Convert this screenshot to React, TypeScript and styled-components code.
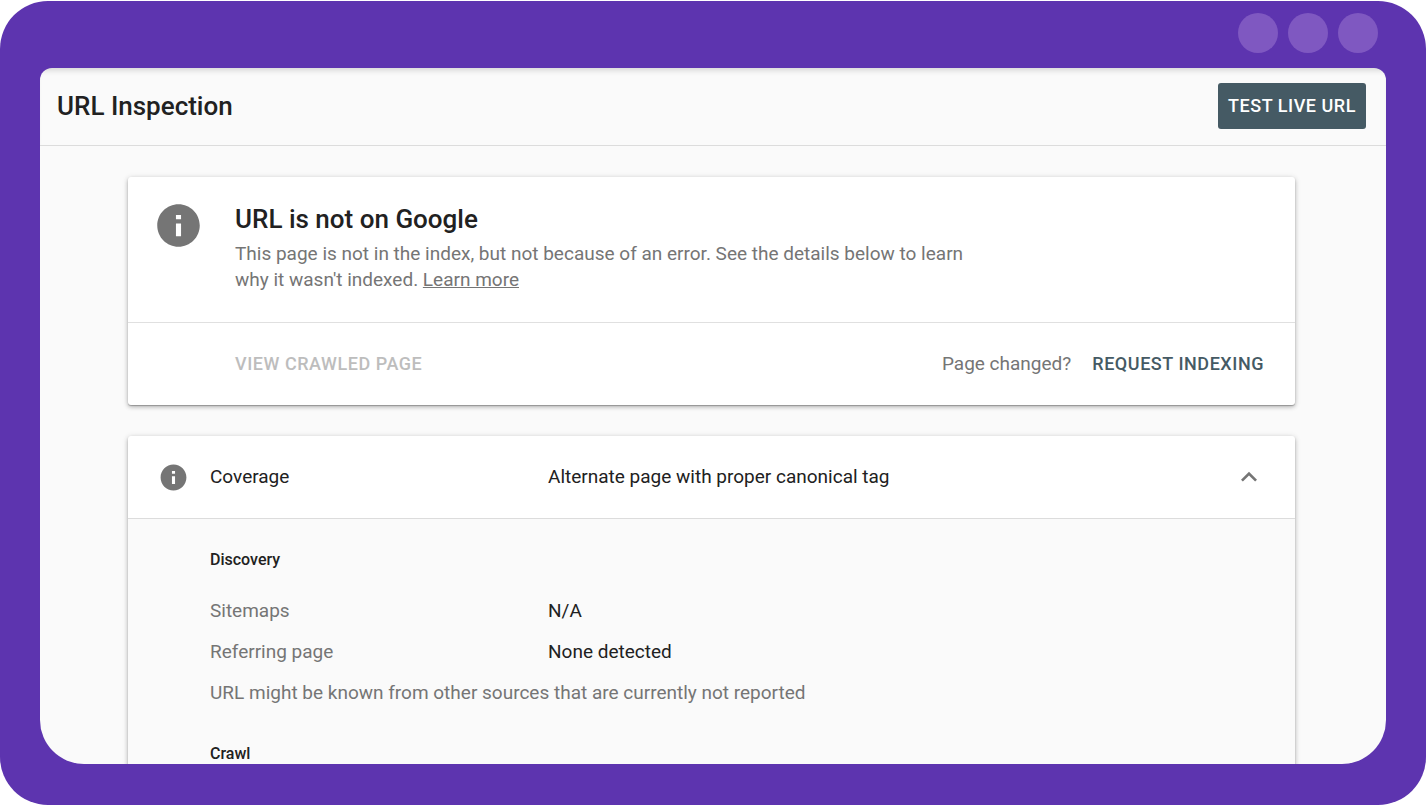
import React, { useState } from "react";
import styled, { createGlobalStyle } from "styled-components";

const GlobalStyle = createGlobalStyle`
  *, *::before, *::after { box-sizing: border-box; }
  body {
    margin: 0;
    background: #fff;
    color: #212121;
    font-family: Roboto, "Liberation Sans", sans-serif;
    font-size: 19px;
    line-height: 26px;
  }
  h1, h2, h3, p, dl, dd { margin: 0; }
  button { font: inherit; border: 0; padding: 0; background: none; cursor: pointer; }
`;

const Frame = styled.div`
  display: flex;
  flex-direction: column;
  height: calc(100vh - 1px);
  margin: 1px 2px 0 0;
  padding: 0 40px 41px;
  border-radius: 48px;
  background: #5d34af;
`;

const FrameBar = styled.div`
  display: flex;
  flex: none;
  justify-content: flex-end;
  align-items: center;
  gap: 10px;
  height: 67px;
  padding: 0 8px 3px 0;
`;

const Dot = styled.span`
  width: 40px;
  height: 40px;
  border-radius: 50%;
  background: #7f58c1;
`;

const Screen = styled.div`
  flex: 1;
  min-height: 0;
  overflow: hidden;
  border-radius: 12px 12px 44px 44px;
  background: #fafafa;
`;

const Header = styled.header`
  display: flex;
  align-items: center;
  justify-content: space-between;
  height: 78px;
  padding: 0 20px 2px 17px;
  border-bottom: 1px solid #dcdcdc;
  box-shadow: inset 0 6px 6px -4px rgba(0, 0, 0, 0.16);
`;

const Title = styled.h1`
  font-size: 26px;
  line-height: 32px;
  font-weight: 500;
`;

const PrimaryButton = styled.button`
  height: 46px;
  padding: 0 10px;
  border-radius: 3px;
  background: #455a64;
  color: #fff;
  font-size: 18px;
  font-weight: 500;
  letter-spacing: 0.03em;
`;

const Content = styled.main`
  display: flex;
  flex-direction: column;
  gap: 31px;
  padding: 31px 91px 31px 88px;
`;

const Card = styled.section`
  border-radius: 3px;
  background: #fff;
  box-shadow: 0 1px 1px rgba(0, 0, 0, 0.24), 0 2px 4px rgba(0, 0, 0, 0.2),
    0 1px 6px rgba(0, 0, 0, 0.14);
`;

const Verdict = styled.div`
  display: flex;
  gap: 31px;
  height: 146px;
  padding: 23px 25px;
  border-bottom: 1px solid #e0e0e0;
`;

const VerdictText = styled.div`
  max-width: 752px;
  padding-top: 3px;
  color: #757575;
`;

const VerdictTitle = styled.h2`
  margin-bottom: 6px;
  color: #212121;
  font-size: 26px;
  line-height: 32px;
  font-weight: 500;
`;

const TextLink = styled.a`
  color: inherit;
  text-decoration: underline;
`;

const Actions = styled.div`
  display: flex;
  align-items: center;
  gap: 21px;
  height: 82px;
  padding: 0 31px 0 107px;
  color: #757575;
`;

const FlatButton = styled.button<{ $push?: boolean }>`
  margin-right: ${(p) => (p.$push ? "auto" : "0")};
  color: #455a64;
  font-size: 18px;
  font-weight: 500;
  letter-spacing: 0.03em;
  &:disabled { color: #bdbdbd; cursor: default; }
`;

const CoverageToggle = styled.button`
  display: grid;
  grid-template-columns: 52px 338px 1fr auto;
  align-items: center;
  width: 100%;
  height: 83px;
  padding: 0 30px;
  border-bottom: 1px solid #dcdcdc;
  color: inherit;
  text-align: left;
`;

const Details = styled.div`
  padding: 25px 31px 31px 82px;
  border-radius: 0 0 3px 3px;
  background: #fafafa;
`;

const GroupTitle = styled.h3`
  margin-bottom: 14px;
  font-size: 16px;
  line-height: 32px;
  font-weight: 500;
`;

const Facts = styled.dl`
  display: grid;
  grid-template-columns: 338px 1fr;
  line-height: 41px;
`;

const FactName = styled.dt`
  color: #757575;
`;

const Note = styled.p`
  margin-bottom: 25px;
  color: #757575;
  line-height: 41px;
`;

const Glyph = styled.svg<{ $size: number }>`
  display: block;
  flex: none;
  width: ${(p) => p.$size}px;
  height: ${(p) => p.$size}px;
  fill: #757575;
`;

const InfoIcon = ({ size }: { size: number }) => (
  <Glyph $size={size} viewBox="0 0 24 24" aria-hidden="true">
    <path d="M12 2C6.48 2 2 6.48 2 12s4.48 10 10 10 10-4.48 10-10S17.52 2 12 2zm1.2 15h-2.4v-6h2.4v6zm0-8h-2.4V7h2.4v2z" />
  </Glyph>
);

const ChevronUp = () => (
  <Glyph $size={32} viewBox="0 0 24 24" aria-hidden="true">
    <path d="M12 8l-6 6 1.41 1.41L12 10.83l4.59 4.58L18 14z" />
  </Glyph>
);

const facts = [
  { name: "Sitemaps", value: "N/A" },
  { name: "Referring page", value: "None detected" },
];

export default function App() {
  const [open, setOpen] = useState(true);
  return (
    <>
      <GlobalStyle />
      <Frame>
        <FrameBar>
          <Dot />
          <Dot />
          <Dot />
        </FrameBar>
        <Screen>
          <Header>
            <Title>URL Inspection</Title>
            <PrimaryButton type="button">TEST LIVE URL</PrimaryButton>
          </Header>
          <Content>
            <Card>
              <Verdict>
                <InfoIcon size={51} />
                <VerdictText>
                  <VerdictTitle>URL is not on Google</VerdictTitle>
                  <p>
                    This page is not in the index, but not because of an error. See the details
                    below to learn why it wasn't indexed. <TextLink href="#more">Learn more</TextLink>
                  </p>
                </VerdictText>
              </Verdict>
              <Actions>
                <FlatButton type="button" $push disabled>
                  VIEW CRAWLED PAGE
                </FlatButton>
                <span>Page changed?</span>
                <FlatButton type="button">REQUEST INDEXING</FlatButton>
              </Actions>
            </Card>
            <Card>
              <CoverageToggle type="button" aria-expanded={open} onClick={() => setOpen(!open)}>
                <InfoIcon size={31} />
                <span>Coverage</span>
                <span>Alternate page with proper canonical tag</span>
                <ChevronUp />
              </CoverageToggle>
              {open && (
                <Details>
                  <GroupTitle>Discovery</GroupTitle>
                  <Facts>
                    {facts.map((f) => (
                      <React.Fragment key={f.name}>
                        <FactName>{f.name}</FactName>
                        <dd>{f.value}</dd>
                      </React.Fragment>
                    ))}
                  </Facts>
                  <Note>URL might be known from other sources that are currently not reported</Note>
                  <GroupTitle>Crawl</GroupTitle>
                </Details>
              )}
            </Card>
          </Content>
        </Screen>
      </Frame>
    </>
  );
}
